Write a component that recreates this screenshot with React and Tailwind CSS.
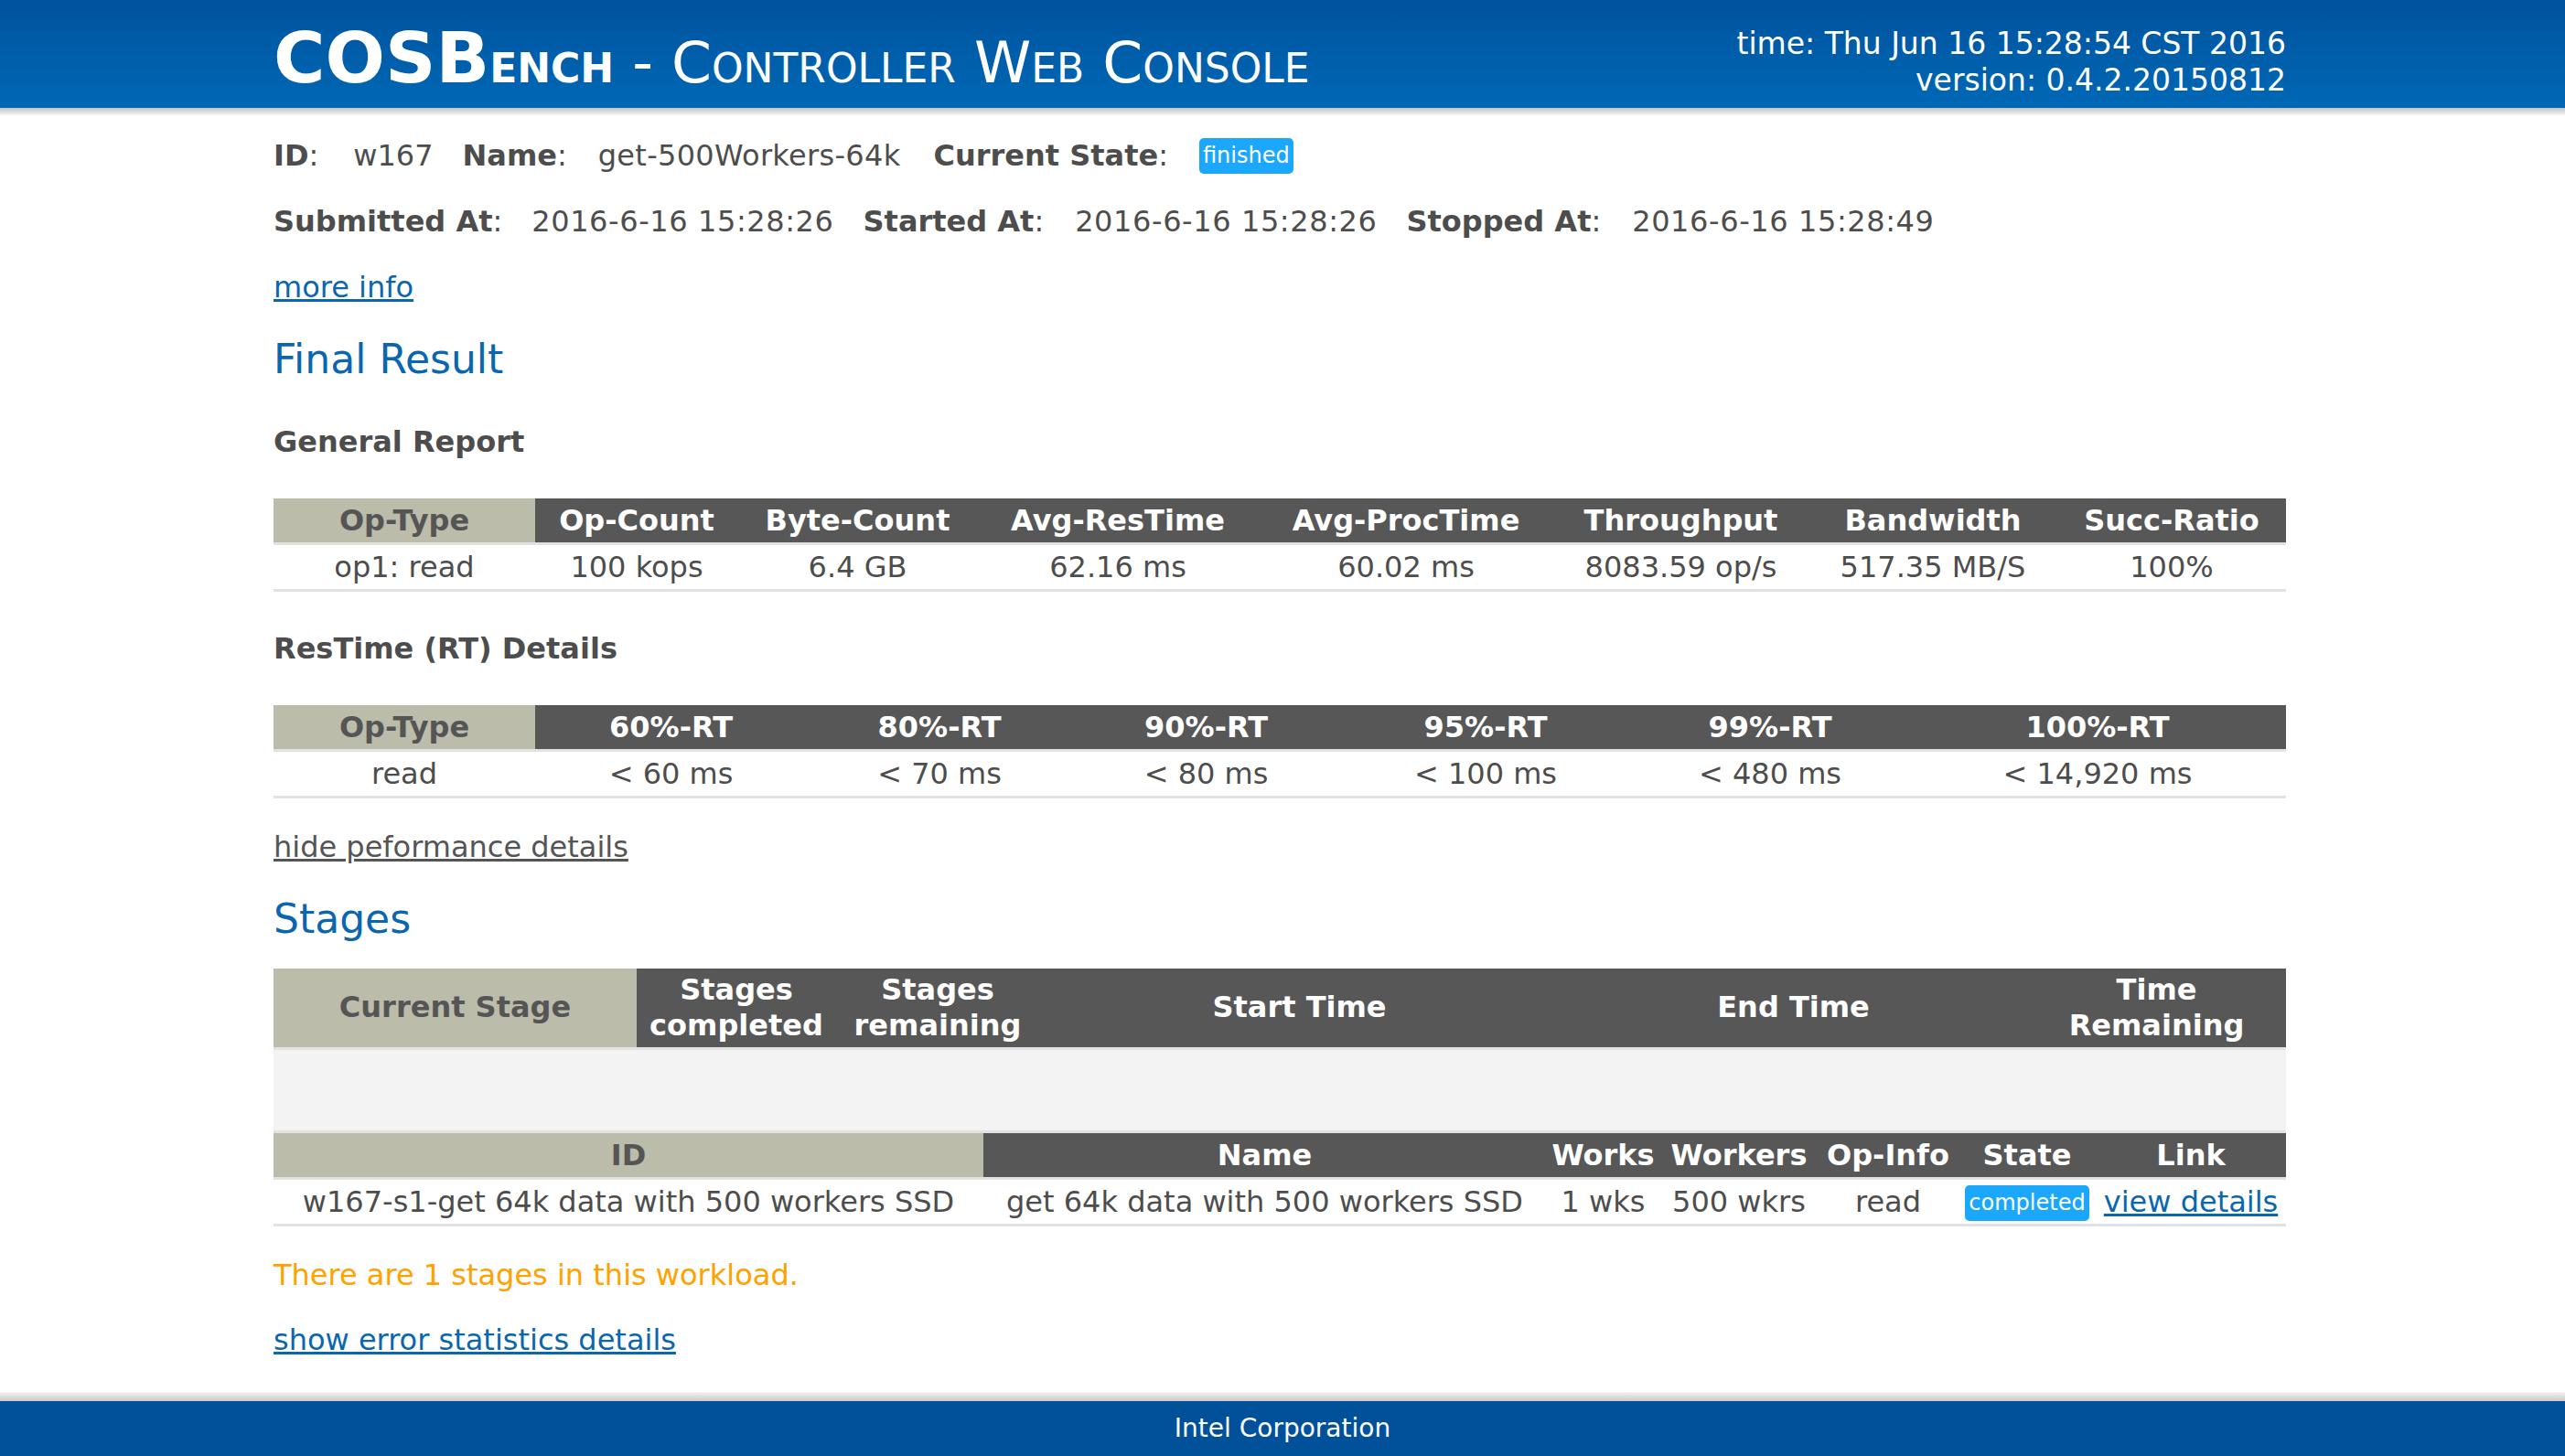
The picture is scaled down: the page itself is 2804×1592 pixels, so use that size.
import React from "react";

const FONT = { fontFamily: '"DejaVu Sans", Verdana, sans-serif' };

function Badge({ children }) {
  return (
    <span className="inline-block bg-[#1aa7fc] text-white text-[24px] leading-[39px] px-[4px] rounded-[5px] align-middle">
      {children}
    </span>
  );
}

const thDark = "bg-[#575757] text-white font-bold text-center";
const thBeige = "bg-[#bcbcab] text-[#555555] font-bold text-center";
const dataRow = "h-[47px] border-t-[3px] border-b-[3px] border-[#e2e2e2]";

function GeneralTable() {
  const heads = ["Op-Count", "Byte-Count", "Avg-ResTime", "Avg-ProcTime", "Throughput", "Bandwidth", "Succ-Ratio"];
  const vals = ["op1: read", "100 kops", "6.4 GB", "62.16 ms", "60.02 ms", "8083.59 op/s", "517.35 MB/S", "100%"];
  return (
    <table className="w-full table-fixed border-collapse">
      <colgroup>
        <col className="w-[286px]" />
        <col className="w-[222px]" />
        <col className="w-[261px]" />
        <col className="w-[308px]" />
        <col className="w-[322px]" />
        <col className="w-[279px]" />
        <col className="w-[272px]" />
        <col className="w-[250px]" />
      </colgroup>
      <thead>
        <tr className="h-[48px]">
          <th className={thBeige}>Op-Type</th>
          {heads.map((h) => (
            <th key={h} className={thDark}>{h}</th>
          ))}
        </tr>
      </thead>
      <tbody>
        <tr className={dataRow}>
          {vals.map((v, i) => (
            <td key={i} className="text-center">{v}</td>
          ))}
        </tr>
      </tbody>
    </table>
  );
}

function RTTable() {
  const heads = ["60%-RT", "80%-RT", "90%-RT", "95%-RT", "99%-RT", "100%-RT"];
  const vals = ["read", "< 60 ms", "< 70 ms", "< 80 ms", "< 100 ms", "< 480 ms", "< 14,920 ms"];
  return (
    <table className="w-full table-fixed border-collapse">
      <colgroup>
        <col className="w-[286px]" />
        <col className="w-[297px]" />
        <col className="w-[290px]" />
        <col className="w-[293px]" />
        <col className="w-[318px]" />
        <col className="w-[304px]" />
        <col className="w-[412px]" />
      </colgroup>
      <thead>
        <tr className="h-[48px]">
          <th className={thBeige}>Op-Type</th>
          {heads.map((h) => (
            <th key={h} className={thDark}>{h}</th>
          ))}
        </tr>
      </thead>
      <tbody>
        <tr className={dataRow}>
          {vals.map((v, i) => (
            <td key={i} className="text-center">{v}</td>
          ))}
        </tr>
      </tbody>
    </table>
  );
}

function StagesTable() {
  return (
    <div>
      <table className="w-full table-fixed border-collapse">
        <colgroup>
          <col className="w-[397px]" />
          <col className="w-[218px]" />
          <col className="w-[222px]" />
          <col className="w-[569px]" />
          <col className="w-[511px]" />
          <col className="w-[283px]" />
        </colgroup>
        <thead>
          <tr className="h-[87px] leading-[39px]">
            <th className={thBeige}>Current Stage</th>
            <th className={thDark}>Stages<br />completed</th>
            <th className={thDark}>Stages<br />remaining</th>
            <th className={thDark}>Start Time</th>
            <th className={thDark}>End Time</th>
            <th className={thDark}>Time<br />Remaining</th>
          </tr>
        </thead>
        <tbody>
          <tr className="h-[91px] bg-[#f3f3f3] border-t-[3px] border-b-[3px] border-[#e2e2e2]">
            <td colSpan={6}></td>
          </tr>
        </tbody>
      </table>
      <table className="w-full table-fixed border-collapse">
        <colgroup>
          <col className="w-[776px]" />
          <col className="w-[615px]" />
          <col className="w-[125px]" />
          <col className="w-[172px]" />
          <col className="w-[154px]" />
          <col className="w-[150px]" />
          <col className="w-[208px]" />
        </colgroup>
        <thead>
          <tr className="h-[48px]">
            <th className={thBeige}>ID</th>
            <th className={thDark}>Name</th>
            <th className={thDark}>Works</th>
            <th className={thDark}>Workers</th>
            <th className={thDark}>Op-Info</th>
            <th className={thDark}>State</th>
            <th className={thDark}>Link</th>
          </tr>
        </thead>
        <tbody>
          <tr className={dataRow}>
            <td className="text-center">w167-s1-get 64k data with 500 workers SSD</td>
            <td className="text-center">get 64k data with 500 workers SSD</td>
            <td className="text-center">1 wks</td>
            <td className="text-center">500 wkrs</td>
            <td className="text-center">read</td>
            <td className="text-center"><Badge>completed</Badge></td>
            <td className="text-center">
              <a href="#" className="text-[#0b66b0] underline">view details</a>
            </td>
          </tr>
        </tbody>
      </table>
    </div>
  );
}

export default function App() {
  return (
    <div className="min-h-screen flex flex-col bg-white text-[#4d4d4d] text-[32px]" style={FONT}>
      <header className="h-[118px] bg-gradient-to-b from-[#00539d] to-[#0068b6] text-white">
        <div className="w-[2200px] ml-[299px] h-full flex items-center justify-between">
          <div className="text-[63px] leading-none [font-variant:small-caps] pt-[8px]">
            <span className="font-bold"><span className="text-[77px]">COSB</span>ench</span>
            <span> - Controller Web Console</span>
          </div>
          <div className="text-right text-[33px] leading-[40px] pt-[18px]">
            <div>time: Thu Jun 16 15:28:54 CST 2016</div>
            <div>version: 0.4.2.20150812</div>
          </div>
        </div>
      </header>
      <div className="h-[8px] bg-gradient-to-b from-[#c4c4c4] to-[#f6f6f6]"></div>

      <main className="w-[2200px] ml-[299px] pt-[8px]">
        <div className="h-[72px] flex items-center">
          <span><b>ID</b>:</span>
          <span className="ml-[38px]">w167</span>
          <span className="ml-[32px]"><b>Name</b>:</span>
          <span className="ml-[34px] tracking-[0.3px]">get-500Workers-64k</span>
          <span className="ml-[36px]"><b>Current State</b>:</span>
          <span className="ml-[34px] flex"><Badge>finished</Badge></span>
        </div>
        <div className="h-[72px] flex items-center">
          <span><b>Submitted At</b>:</span>
          <span className="ml-[32px] tracking-[0.6px]">2016-6-16 15:28:26</span>
          <span className="ml-[32px]"><b>Started At</b>:</span>
          <span className="ml-[34px] tracking-[0.6px]">2016-6-16 15:28:26</span>
          <span className="ml-[32px]"><b>Stopped At</b>:</span>
          <span className="ml-[34px] tracking-[0.6px]">2016-6-16 15:28:49</span>
        </div>
        <div className="h-[72px] flex items-center">
          <a href="#" className="text-[#0b66b0] underline">more info</a>
        </div>
        <div className="h-[86px] flex items-center">
          <h2 className="text-[44px] text-[#0b66b0]">Final Result</h2>
        </div>
        <div className="h-[94px] flex items-center">
          <h3 className="font-bold">General Report</h3>
        </div>
        <div className="mt-[15px]">
          <GeneralTable />
        </div>
        <div className="h-[124px] flex items-center">
          <h3 className="font-bold">ResTime (RT) Details</h3>
        </div>
        <RTTable />
        <div className="h-[106px] flex items-center">
          <a href="#" className="text-[#555555] underline">hide peformance details</a>
        </div>
        <div className="h-[52px] flex items-center">
          <h2 className="text-[44px] text-[#0b66b0]">Stages</h2>
        </div>
        <div className="mt-[28px]">
          <StagesTable />
        </div>
        <div className="h-[106px] flex items-center text-[#ffa200]">
          There are 1 stages in this workload.
        </div>
        <div className="h-[36px] flex items-center">
          <a href="#" className="text-[#0b66b0] underline">show error statistics details</a>
        </div>
      </main>

      <footer className="mt-auto">
        <div className="h-[10px] bg-gradient-to-b from-[#f4f4f4] to-[#c8c8c8]"></div>
        <div className="h-[60px] bg-[#00519a] text-white text-[28px] flex items-center justify-center">
          Intel Corporation
        </div>
      </footer>
    </div>
  );
}
